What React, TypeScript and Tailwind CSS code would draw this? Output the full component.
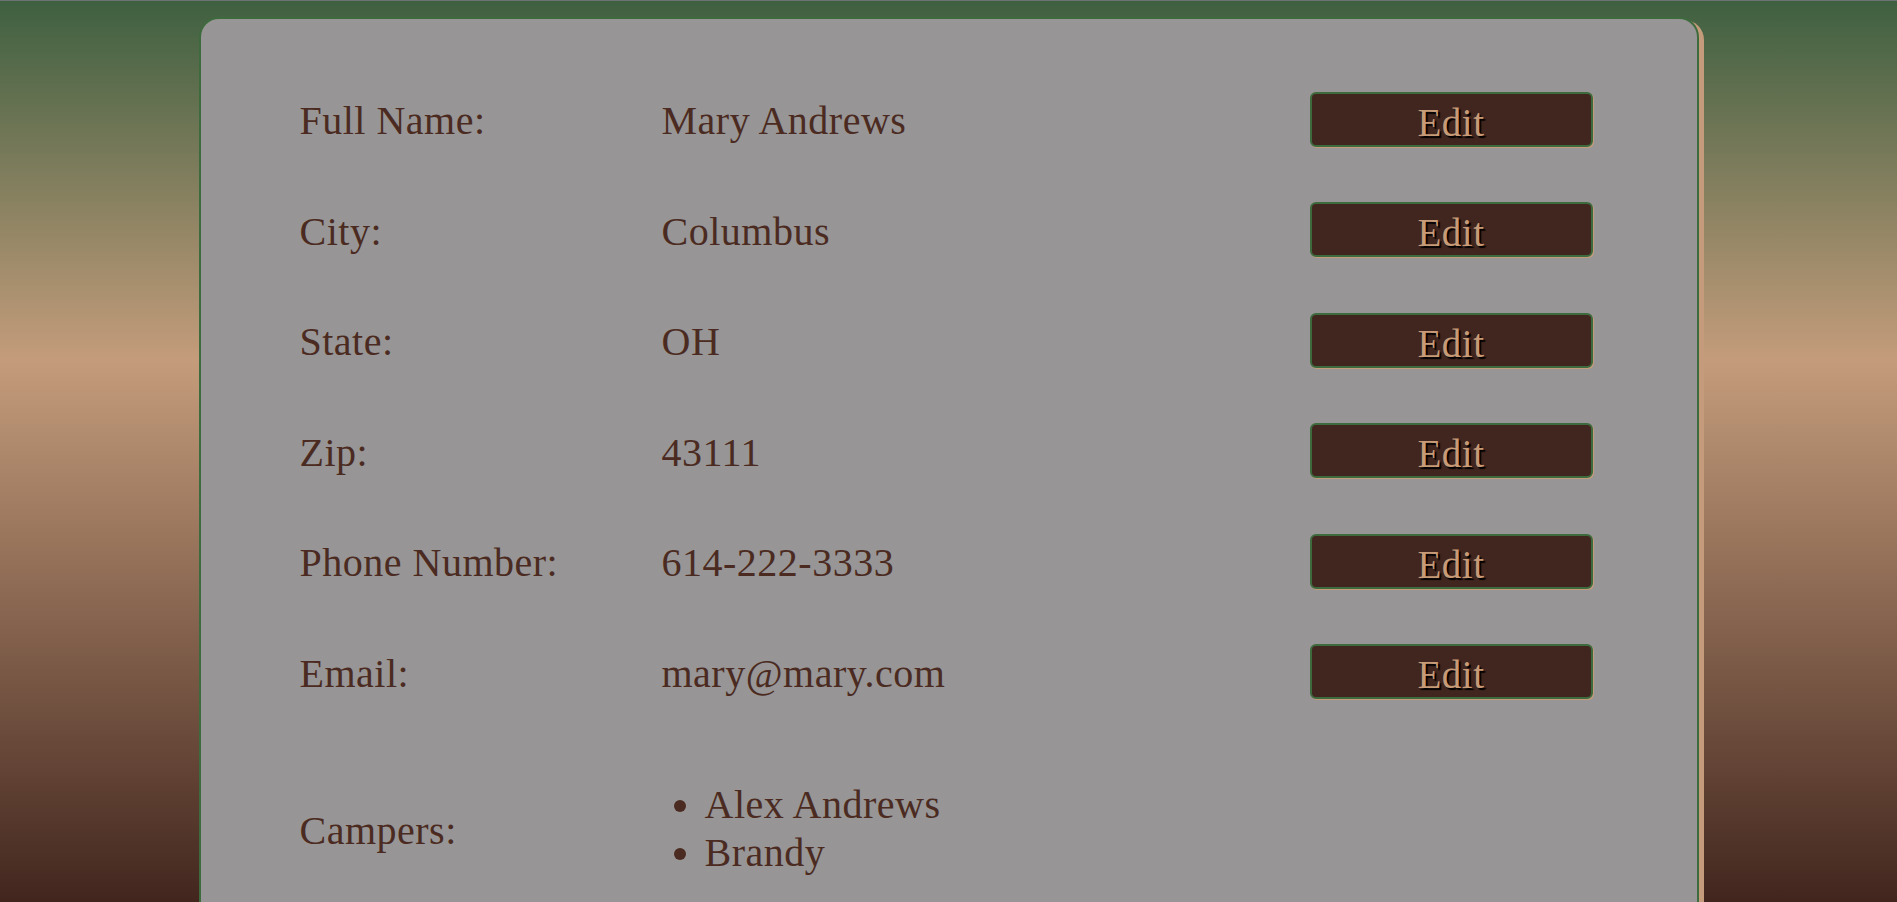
const fields = [
  { label: "Full Name:", value: "Mary Andrews" },
  { label: "City:", value: "Columbus" },
  { label: "State:", value: "OH" },
  { label: "Zip:", value: "43111" },
  { label: "Phone Number:", value: "614-222-3333" },
  { label: "Email:", value: "mary@mary.com" },
];

const campers = ["Alex Andrews", "Brandy"];

export default function App() {
  return (
    <main
      className="min-h-screen border-t border-[#6d7371] bg-fixed bg-[linear-gradient(to_bottom,#3e6040_0%,#c49c7b_40%,#42261e_100%)] pt-[16px] text-[#4b2b21]"
      style={{ fontFamily: '"Liberation Serif", "Times New Roman", serif' }}
    >
      {/* Account card */}
      <section className="mx-auto w-[1500px] rounded-t-[20px] border-2 border-b-0 border-[#3e6b3e] bg-[#979595] pt-[45px] pb-[80px] pl-[99px] pr-[104px] shadow-[5px_3px_0_#c49c7b]">
        {fields.map((f) => (
          <div key={f.label} className="grid h-[110.5px] grid-cols-[362px_1fr_283px] items-center text-[40px] tracking-[0.5px]">
            <span className="pt-[4px]">{f.label}</span>
            <span className="pt-[4px]">{f.value}</span>
            <button className="h-[55px] rounded-[6px] border-2 border-[#3e6b3e] bg-[#40261e] pb-[8px] text-[39px] text-[#c89b78] shadow-[1px_1px_0_#c49c7b] [text-shadow:2px_2px_1px_#000]">
              Edit
            </button>
          </div>
        ))}

        {/* Campers */}
        <div className="grid grid-cols-[362px_1fr_283px] items-center pt-[54px] text-[40px] tracking-[0.5px]">
          <span className="pt-[4px]">Campers:</span>
          <ul className="list-disc pl-[43px] leading-[48px] marker:text-[#4b2b21]">
            {campers.map((c) => (
              <li key={c}>{c}</li>
            ))}
          </ul>
          <span />
        </div>
      </section>
    </main>
  );
}
